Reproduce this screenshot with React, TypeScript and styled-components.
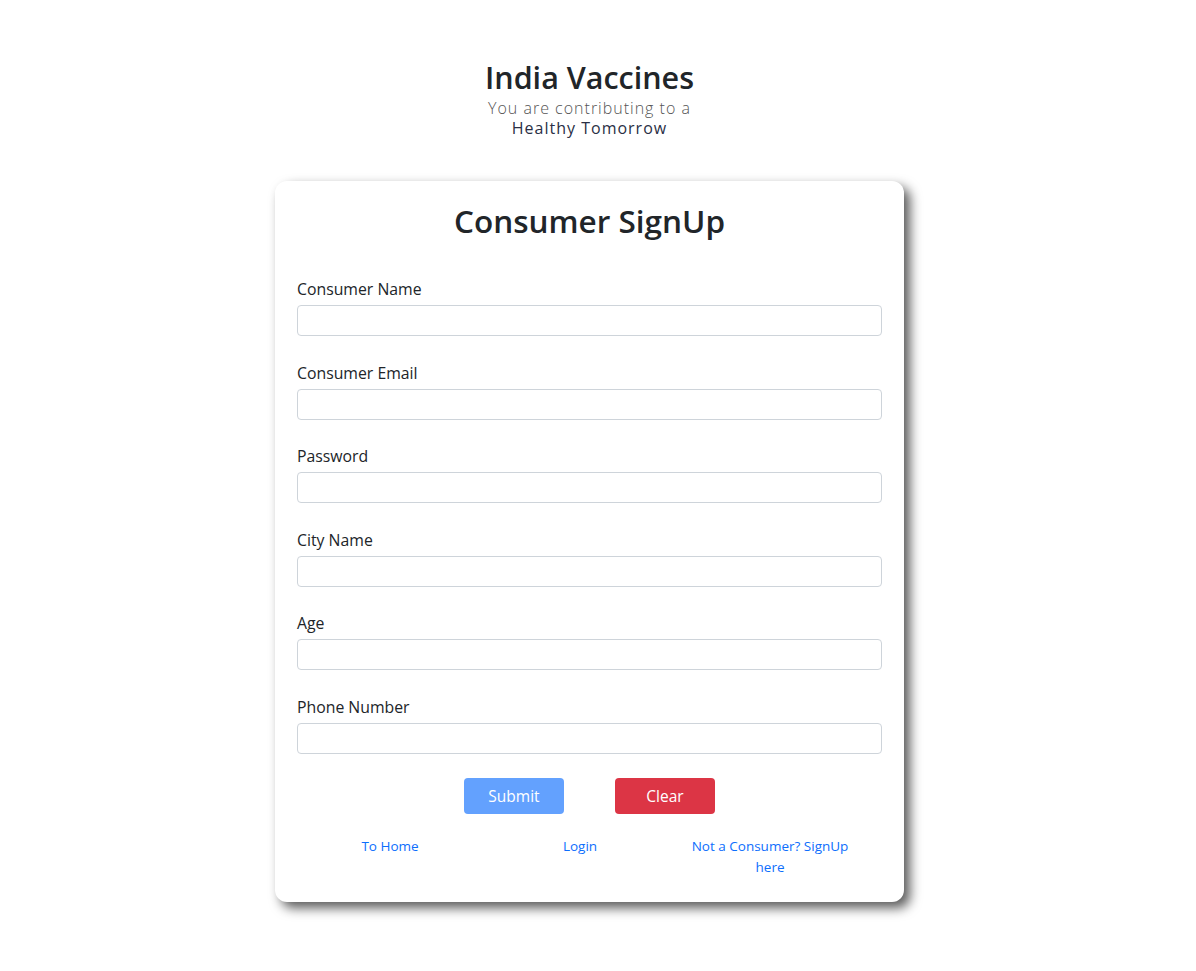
import React from "react";
import styled, { createGlobalStyle } from "styled-components";

const Global = createGlobalStyle`
  html, body { margin: 0; padding: 0; background: #fff; }
  body { font-family: "Open Sans", "Noto Sans", sans-serif; color: #212529; }
  * { box-sizing: border-box; }
`;

const Page = styled.div`
  padding: 0 17px 40px 0;
  display: flex;
  flex-direction: column;
  align-items: center;
`;

const Header = styled.header`
  margin-top: 57px;
  text-align: center;
`;

const Brand = styled.h1`
  margin: 0 0 1px;
  font-size: 30.5px;
  font-weight: 600;
  line-height: 40px;
  color: #212529;
`;

const Tagline = styled.p<{ $dark?: boolean }>`
  margin: 0;
  font-size: 16px;
  line-height: 20px;
  letter-spacing: 1px;
  font-weight: ${(p) => (p.$dark ? 400 : 300)};
  color: ${(p) => (p.$dark ? "#2a2f45" : "#555")};
`;

const Card = styled.main`
  margin-top: 43px;
  width: 629px;
  background: #fff;
  border-radius: 12px;
  box-shadow: 6px 6px 12px rgba(0, 0, 0, 0.65);
  padding: 19px 22px 24px;
`;

const Title = styled.h2`
  margin: 0 0 35px;
  text-align: center;
  font-size: 31.5px;
  font-weight: 600;
  line-height: 42px;
  color: #212529;
`;

const Field = styled.div`
  margin-bottom: 24.5px;
`;

const Label = styled.label`
  display: block;
  font-size: 15.8px;
  line-height: 24px;
  margin-bottom: 4px;
  color: #212529;
`;

const Input = styled.input`
  display: block;
  width: 100%;
  height: 31px;
  border: 1px solid #ced4da;
  border-radius: 4px;
  padding: 4px 10px;
  font-size: 15px;
  font-family: inherit;
  outline: none;
`;

const Buttons = styled.div`
  display: flex;
  justify-content: center;
  gap: 51px;
`;

const Button = styled.button<{ $variant: "primary" | "danger" }>`
  width: 100px;
  height: 36px;
  border: none;
  border-radius: 4px;
  color: #fff;
  font-family: inherit;
  font-size: 15.5px;
  background: ${(p) => (p.$variant === "primary" ? "#63a1fe" : "#dc3545")};
  cursor: pointer;
`;

const Links = styled.nav`
  display: grid;
  grid-template-columns: repeat(3, 190px);
  margin: 22px 0 0 -2px;
`;

const LinkCell = styled.div`
  text-align: center;
  padding: 0 10px;
  font-size: 13.5px;
  line-height: 21px;
`;

const A = styled.a`
  color: #0d6efd;
  text-decoration: none;
`;

const fields = ["Consumer Name", "Consumer Email", "Password", "City Name", "Age", "Phone Number"];

export default function App() {
  return (
    <>
      <Global />
      <Page>
        <Header>
          <Brand>India Vaccines</Brand>
          <Tagline>You are contributing to a</Tagline>
          <Tagline $dark>Healthy Tomorrow</Tagline>
        </Header>
        <Card>
          <Title>Consumer SignUp</Title>
          {fields.map((f) => (
            <Field key={f}>
              <Label>{f}</Label>
              <Input type={f === "Password" ? "password" : "text"} />
            </Field>
          ))}
          <Buttons>
            <Button $variant="primary">Submit</Button>
            <Button $variant="danger">Clear</Button>
          </Buttons>
          <Links>
            <LinkCell><A href="#">To Home</A></LinkCell>
            <LinkCell><A href="#">Login</A></LinkCell>
            <LinkCell><A href="#">Not a Consumer? SignUp here</A></LinkCell>
          </Links>
        </Card>
      </Page>
    </>
  );
}
